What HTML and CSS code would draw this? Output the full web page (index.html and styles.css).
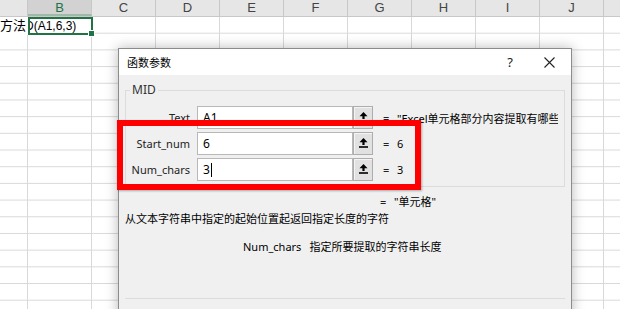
FILE: index.html
```html
<!DOCTYPE html>
<html lang="zh-CN">
<head>
    <meta charset="UTF-8">
    <title>函数参数</title>
    <link rel="stylesheet" href="styles.css">
</head>
<body>
    <div class="sheet">
        <div class="col-header">
            <div class="hcell col-a"></div>
            <div class="hcell active">B</div>
            <div class="hcell">C</div>
            <div class="hcell">D</div>
            <div class="hcell">E</div>
            <div class="hcell">F</div>
            <div class="hcell">G</div>
            <div class="hcell">H</div>
            <div class="hcell">I</div>
            <div class="hcell">J</div>
            <div class="hcell last"></div>
        </div>
        <div class="grid">
            <div class="row-1">
                <div class="cell col-a">方法</div>
                <div class="cell selected"><span class="formula">D(A1,6,3)</span><span class="handle"></span></div>
            </div>
        </div>
    </div>

    <div class="dialog">
        <div class="title-bar">
            <span class="title">函数参数</span>
            <span class="help-btn">?</span>
            <svg class="close-btn" width="11" height="11" viewBox="0 0 11 11"><path d="M0.5 0.5 L10.5 10.5 M10.5 0.5 L0.5 10.5" stroke="#222" stroke-width="1.1" fill="none"/></svg>
        </div>
        <div class="dialog-body">
            <div class="group">
                <span class="group-title">MID</span>
                <div class="arg-row">
                    <span class="arg-label">Text</span>
                    <div class="arg-input">A1</div>
                    <div class="ref-btn"><svg width="9" height="10" viewBox="0 0 9 10"><path d="M4.5 0 L8.5 4.2 L5.6 4.2 L5.6 7 L3.4 7 L3.4 4.2 L0.5 4.2 Z" fill="#000"/><rect x="0" y="8.2" width="9" height="1.6" fill="#000"/></svg></div>
                    <span class="eq">=</span>
                    <span class="val">"Excel单元格部分内容提取有哪些方法"</span>
                </div>
                <div class="arg-row">
                    <span class="arg-label">Start_num</span>
                    <div class="arg-input">6</div>
                    <div class="ref-btn"><svg width="9" height="10" viewBox="0 0 9 10"><path d="M4.5 0 L8.5 4.2 L5.6 4.2 L5.6 7 L3.4 7 L3.4 4.2 L0.5 4.2 Z" fill="#000"/><rect x="0" y="8.2" width="9" height="1.6" fill="#000"/></svg></div>
                    <span class="eq">=</span>
                    <span class="val">6</span>
                </div>
                <div class="arg-row">
                    <span class="arg-label">Num_chars</span>
                    <div class="arg-input">3<span class="caret"></span></div>
                    <div class="ref-btn"><svg width="9" height="10" viewBox="0 0 9 10"><path d="M4.5 0 L8.5 4.2 L5.6 4.2 L5.6 7 L3.4 7 L3.4 4.2 L0.5 4.2 Z" fill="#000"/><rect x="0" y="8.2" width="9" height="1.6" fill="#000"/></svg></div>
                    <span class="eq">=</span>
                    <span class="val">3</span>
                </div>
            </div>
            <div class="result"><span class="eq">=</span><span class="result-val">"单元格"</span></div>
            <div class="desc">从文本字符串中指定的起始位置起返回指定长度的字符</div>
            <div class="arg-help"><span class="help-name">Num_chars</span><span>指定所要提取的字符串长度</span></div>
            <div class="divider"></div>
        </div>
    </div>

    <div class="highlight"></div>
</body>
</html>
```

FILE: styles.css
```css
body {
    margin: 0;
    width: 620px;
    height: 309px;
    overflow: hidden;
    position: relative;
    background-color: #fff;
    font-family: "Noto Sans", "Noto Sans CJK SC", sans-serif;
    color: #000;
}
.sheet {
    height: 309px;
}
.col-header {
    display: flex;
    height: 17px;
    background-color: #e6e6e6;
    border-bottom: 1px solid #c8c8c8;
    box-sizing: border-box;
}
.hcell {
    width: 64px;
    flex-shrink: 0;
    border-right: 1px solid #c8c8c8;
    box-sizing: border-box;
    text-align: center;
    font-family: "Liberation Sans", "Noto Sans", sans-serif;
    font-size: 13px;
    line-height: 16px;
    color: #444;
}
.hcell.col-a {
    width: 28px;
}
.hcell.active {
    background-color: #d2d2d2;
    color: #217346;
    border-bottom: 2px solid #9fb9a8;
}
.hcell.last {
    flex: 1;
    border-right: none;
}
.grid {
    height: 292px;
    background-image:
        linear-gradient(to right, #d9d9d9 1px, transparent 1px),
        linear-gradient(to bottom, transparent 16px, #d9d9d9 16px, #d9d9d9 16.7px, transparent 16.7px);
    background-size: 64px 100%, 100% 16.7px;
    background-position: 27px 0, 0 0;
}
.row-1 {
    display: flex;
    height: 18px;
}
.cell {
    box-sizing: border-box;
    font-size: 12px;
    line-height: 17px;
    white-space: nowrap;
    overflow: hidden;
}
.cell.col-a {
    width: 28px;
    text-align: right;
    font-size: 13px;
    padding-right: 2px;
    background-color: #fff;
}
.cell.selected {
    width: 65px;
    position: relative;
    overflow: visible;
    border: 2px solid #217346;
    background-color: #fff;
    font-family: "Liberation Sans", "Noto Sans", sans-serif;
    line-height: 14px;
}
.formula {
    display: block;
    overflow: hidden;
    text-indent: -7px;
    padding-left: 2px;
}
.handle {
    position: absolute;
    right: -4px;
    bottom: -4px;
    width: 5px;
    height: 5px;
    background-color: #217346;
    border: 1px solid #fff;
}
.dialog {
    position: absolute;
    left: 118px;
    top: 48px;
    width: 454px;
    height: 280px;
    box-sizing: border-box;
    border: 1px solid #8c8c8c;
    background-color: #f0f0f0;
    box-shadow: 0 0 12px rgba(0, 0, 0, 0.28);
    font-size: 11px;
}
.title-bar {
    display: flex;
    align-items: center;
    height: 26px;
    background-color: #fff;
    padding-left: 8px;
}
.title {
    font-size: 11px;
}
.help-btn {
    margin-left: auto;
    font-size: 13px;
    color: #222;
}
.close-btn {
    margin-left: 31px;
    margin-right: 16px;
}
.dialog-body {
    padding: 0 6px;
}
.group {
    position: relative;
    margin-top: 15px;
    width: 440px;
    box-sizing: border-box;
    border: 1px solid #dcdcdc;
    padding: 15px 0 5px 0;
    display: flex;
    flex-direction: column;
    gap: 3px;
}
.group-title {
    position: absolute;
    left: 4px;
    top: -9px;
    padding: 0 2px;
    background-color: #f0f0f0;
    font-size: 12px;
    line-height: 16px;
    color: #333;
}
.arg-row {
    display: flex;
    align-items: center;
    height: 23px;
}
.arg-label {
    width: 64px;
    margin-right: 7px;
    text-align: right;
    font-size: 11px;
    color: #222;
}
.arg-input {
    width: 156px;
    height: 23px;
    box-sizing: border-box;
    border: 1px solid #b8b8b8;
    background-color: #fff;
    padding-left: 5px;
    display: flex;
    align-items: center;
    font-size: 12px;
}
.caret {
    display: inline-block;
    width: 1px;
    height: 14px;
    margin-left: 1px;
    background-color: #000;
}
.ref-btn {
    width: 20px;
    height: 23px;
    box-sizing: border-box;
    border: 1px solid #adadad;
    background-color: #e1e1e1;
    box-shadow: inset 1px 1px 0 #f4f4f4;
    display: flex;
    justify-content: center;
    padding-top: 5px;
}
.eq {
    margin-left: 10px;
    width: 7px;
    font-size: 11px;
    color: #222;
}
.val {
    margin-left: 7px;
    margin-right: 6px;
    flex: 1;
    white-space: nowrap;
    overflow: hidden;
    font-size: 11px;
}
.result {
    display: flex;
    margin-top: 7px;
    padding-left: 245px;
    line-height: 16px;
}
.result-val {
    margin-left: 7px;
    font-size: 11px;
}
.desc {
    margin-top: 1px;
    line-height: 16px;
}
.arg-help {
    margin-top: 12px;
    padding-left: 118px;
    line-height: 16px;
}
.help-name {
    font-size: 11px;
    margin-right: 8px;
}
.divider {
    margin-top: 43px;
    width: 440px;
    border-top: 1px solid #dcdcdc;
}
.highlight {
    position: absolute;
    left: 117px;
    top: 120px;
    width: 304px;
    height: 70px;
    box-sizing: border-box;
    border: 6px solid #ff0000;
    box-shadow: 1px 1px 2px rgba(0, 0, 0, 0.3);
}
```
